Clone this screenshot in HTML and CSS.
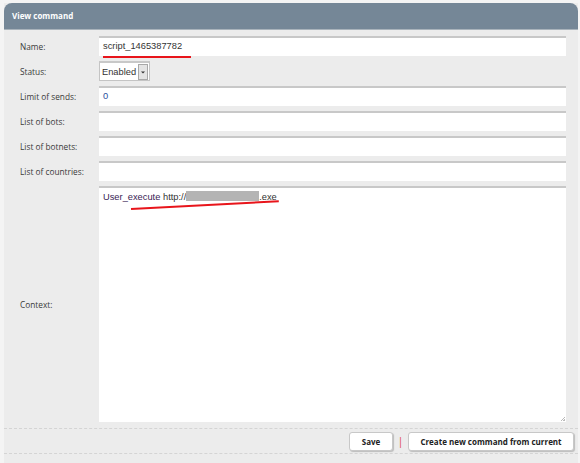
FILE: index.html
```html
<!DOCTYPE html>
<html>
<head>
<meta charset="utf-8">
<link rel="stylesheet" href="styles.css">
</head>
<body>
<div class="panel">
  <div class="header">View command</div>
  <div class="form">
    <div class="row">
      <div class="label">Name:</div>
      <div class="field"><div class="input"><span class="val underline-name">script_1465387782</span></div></div>
    </div>
    <div class="row">
      <div class="label">Status:</div>
      <div class="field"><div class="select"><span class="val">Enabled</span><span class="arrow"><svg width="8" height="14" viewBox="0 0 8 14"><path d="M2 6.5h4L4 8.5z" fill="#333"/></svg></span></div></div>
    </div>
    <div class="row">
      <div class="label">Limit of sends:</div>
      <div class="field"><div class="input"><span class="val blue">0</span></div></div>
    </div>
    <div class="row">
      <div class="label">List of bots:</div>
      <div class="field"><div class="input"></div></div>
    </div>
    <div class="row">
      <div class="label">List of botnets:</div>
      <div class="field"><div class="input"></div></div>
    </div>
    <div class="row">
      <div class="label">List of countries:</div>
      <div class="field"><div class="input"></div></div>
    </div>
    <div class="row ctx">
      <div class="label">Context:</div>
      <div class="field"><div class="textarea"><span class="val"><span class="purple">User_execute</span> http://<span class="redact"></span>.exe</span><span class="uline"></span><span class="grip"></span></div></div>
    </div>
  </div>
  <div class="actions">
    <button class="btn save">Save</button>
    <span class="sep">|</span>
    <button class="btn create">Create new command from current</button>
  </div>
</div>
</body>
</html>
```

FILE: styles.css
```css
html, body {
  margin: 0;
  padding: 0;
  background: #f4f4f4;
}
body {
  width: 580px;
  height: 463px;
  padding: 3px 2px 0 4px;
  box-sizing: border-box;
  font-family: "Open Sans", "DejaVu Sans", sans-serif;
}
.panel {
  background: #ececec;
  height: 460px;
  display: flex;
  flex-direction: column;
}
.header {
  height: 26px;
  background: #758797;
  border-radius: 8px 8px 0 0;
  color: #fff;
  font-weight: bold;
  font-size: 8px;
  line-height: 26px;
  padding-left: 8px;
  border-bottom: 1px solid #a9b3bb;
}
.form {
  display: flex;
  flex-direction: column;
  gap: 5px;
  padding: 6px 12px 0 0;
}
.row {
  display: flex;
  align-items: center;
  height: 20px;
}
.row.ctx {
  height: 236px;
}
.label {
  width: 95px;
  flex: none;
  padding-left: 16px;
  box-sizing: border-box;
  font-size: 8.3px;
  color: #3a3a3a;
}
.field {
  flex: 1;
  height: 100%;
}
.input, .textarea {
  height: 100%;
  background: #fff;
  border-top: 2px solid #c8c8c8;
  box-sizing: border-box;
  position: relative;
  font-family: "Liberation Sans", Arial, sans-serif;
  font-size: 9.3px;
  line-height: 17px;
  color: #333;
}
.input .val {
  padding-left: 4px;
  position: relative;
}
.blue { color: #2a4f9e; }
.underline-name::after {
  content: "";
  position: absolute;
  left: 4px;
  top: 15px;
  width: 88px;
  height: 2px;
  background: #e8151b;
}
.select {
  width: 51px;
  height: 100%;
  background: #fff;
  border: 1px solid #c4c4c4;
  border-top: 2px solid #c8c8c8;
  box-sizing: border-box;
  display: flex;
  align-items: center;
  justify-content: space-between;
  font-family: "Liberation Sans", Arial, sans-serif;
  font-size: 9.3px;
  line-height: 16px;
  color: #333;
  padding-right: 1px;
}
.select .val {
  padding-left: 2px;
}
.arrow {
  width: 8px;
  height: 14px;
  background: #e4e4e4;
  border: 1px solid #a8a8a8;
  display: flex;
}
.textarea {
  padding: 2px 4px;
  line-height: 14px;
}
.purple { color: #3a1d55; }
.redact {
  display: inline-block;
  width: 73px;
  height: 10px;
  background: #b4b4b4;
  vertical-align: -1px;
}
.uline {
  position: absolute;
  left: 32px;
  top: 20px;
  width: 148px;
  height: 2px;
  background: #e8151b;
  transform: rotate(-3deg);
  transform-origin: left center;
}
.grip {
  position: absolute;
  right: 1px;
  bottom: 1px;
  width: 5px;
  height: 5px;
  background: linear-gradient(135deg, transparent 55%, #bbb 55%, #bbb 65%, transparent 65%, transparent 80%, #bbb 80%);
}
.actions {
  margin-top: 6px;
  border-top: 1px dashed #d4d4d4;
  border-bottom: 1px dashed #d4d4d4;
  height: 24px;
  display: flex;
  align-items: center;
  justify-content: flex-end;
  padding-right: 4px;
}
.btn {
  height: 19px;
  background: #fff;
  border: 1px solid #c8c8c8;
  border-radius: 3px;
  box-shadow: 1px 1px 1px #bdbdbd;
  font-family: "Open Sans", "DejaVu Sans", sans-serif;
  font-weight: bold;
  font-size: 8px;
  color: #222;
  padding: 0;
  white-space: nowrap;
}
.save {
  width: 44px;
}
.create {
  width: 166px;
}
.sep {
  color: #e04040;
  font-size: 10px;
  width: 15px;
  text-align: center;
}
```
